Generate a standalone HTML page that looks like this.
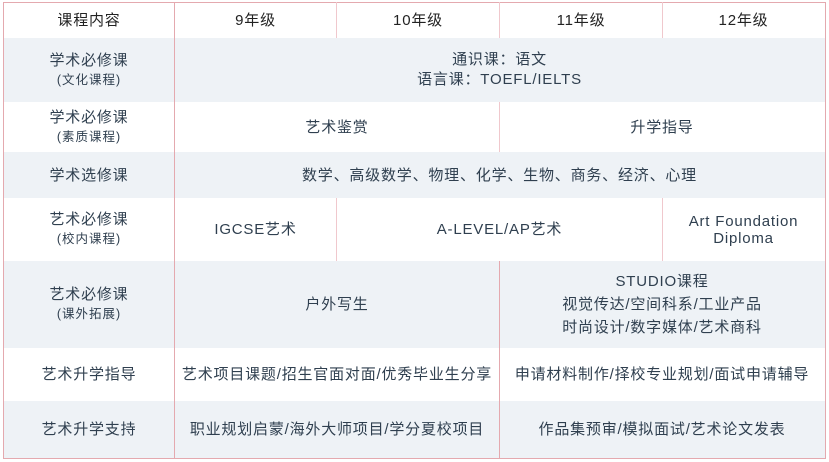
<!DOCTYPE html><html><head><meta charset="utf-8"><style>
body{margin:0;width:829px;height:462px;background:#fff;position:relative;font-family:"Liberation Sans","Noto Sans CJK SC",sans-serif;color:#2f3f4f;overflow:hidden}
.r{position:absolute;left:4px;width:821px}
.g{background:#eef2f6}
.c{position:absolute;display:flex;flex-direction:column;align-items:center;justify-content:center;text-align:center;font-size:15px;line-height:19px;letter-spacing:0.8px}
.s{font-size:12.5px;line-height:20px;letter-spacing:1px}
.v{position:absolute;width:1px}
</style></head><body>
<div class="r g" style="top:38px;height:64px"></div>
<div class="r g" style="top:152px;height:46px"></div>
<div class="r g" style="top:261px;height:87px"></div>
<div class="r g" style="top:401px;height:57px"></div>
<div style="position:absolute;left:3px;top:2px;width:821px;height:455px;border:1px solid #e4a9af"></div>
<div class="v" style="left:174px;top:2px;height:456px;background:#e4a9af"></div>
<div class="v" style="left:336px;top:2px;height:36px;background:#f0c8cd"></div>
<div class="v" style="left:499px;top:2px;height:36px;background:#f0c8cd"></div>
<div class="v" style="left:662px;top:2px;height:36px;background:#f0c8cd"></div>
<div class="v" style="left:499px;top:102px;height:50px;background:#f0c8cd"></div>
<div class="v" style="left:336px;top:198px;height:63px;background:#f0c8cd"></div>
<div class="v" style="left:662px;top:198px;height:63px;background:#f0c8cd"></div>
<div class="v" style="left:499px;top:261px;height:197px;background:#e4a9af"></div>

<div class="c" style="left:4px;width:170px;top:2px;height:36px;color:#222">课程内容</div>
<div class="c" style="left:175px;width:161px;top:2px;height:36px;color:#222">9年级</div>
<div class="c" style="left:337px;width:162px;top:2px;height:36px;color:#222">10年级</div>
<div class="c" style="left:500px;width:162px;top:2px;height:36px;color:#222">11年级</div>
<div class="c" style="left:663px;width:161px;top:2px;height:36px;color:#222">12年级</div>

<div class="c" style="left:4px;width:170px;top:38px;height:64px">学术必修课<span class="s">(文化课程)</span></div>
<div class="c" style="left:175px;width:649px;top:38px;height:64px;line-height:20px">通识课：语文<br>语言课：TOEFL/IELTS</div>

<div class="c" style="left:4px;width:170px;top:102px;height:50px">学术必修课<span class="s">(素质课程)</span></div>
<div class="c" style="left:175px;width:324px;top:102px;height:50px">艺术鉴赏</div>
<div class="c" style="left:500px;width:324px;top:102px;height:50px">升学指导</div>

<div class="c" style="left:4px;width:170px;top:152px;height:46px">学术选修课</div>
<div class="c" style="left:175px;width:649px;top:152px;height:46px">数学、高级数学、物理、化学、生物、商务、经济、心理</div>

<div class="c" style="left:4px;width:170px;top:198px;height:63px">艺术必修课<span class="s">(校内课程)</span></div>
<div class="c" style="left:175px;width:161px;top:198px;height:63px">IGCSE艺术</div>
<div class="c" style="left:337px;width:325px;top:198px;height:63px">A-LEVEL/AP艺术</div>
<div class="c" style="left:663px;width:161px;top:198px;height:63px;line-height:17px">Art Foundation<br>Diploma</div>

<div class="c" style="left:4px;width:170px;top:261px;height:87px">艺术必修课<span class="s">(课外拓展)</span></div>
<div class="c" style="left:175px;width:324px;top:261px;height:87px">户外写生</div>
<div class="c" style="left:500px;width:324px;top:261px;height:87px;line-height:23px">STUDIO课程<br>视觉传达/空间科系/工业产品<br>时尚设计/数字媒体/艺术商科</div>

<div class="c" style="left:4px;width:170px;top:348px;height:53px">艺术升学指导</div>
<div class="c" style="left:175px;width:324px;top:348px;height:53px">艺术项目课题/招生官面对面/优秀毕业生分享</div>
<div class="c" style="left:500px;width:324px;top:348px;height:53px">申请材料制作/择校专业规划/面试申请辅导</div>

<div class="c" style="left:4px;width:170px;top:401px;height:57px">艺术升学支持</div>
<div class="c" style="left:175px;width:324px;top:401px;height:57px">职业规划启蒙/海外大师项目/学分夏校项目</div>
<div class="c" style="left:500px;width:324px;top:401px;height:57px">作品集预审/模拟面试/艺术论文发表</div>
</body></html>
